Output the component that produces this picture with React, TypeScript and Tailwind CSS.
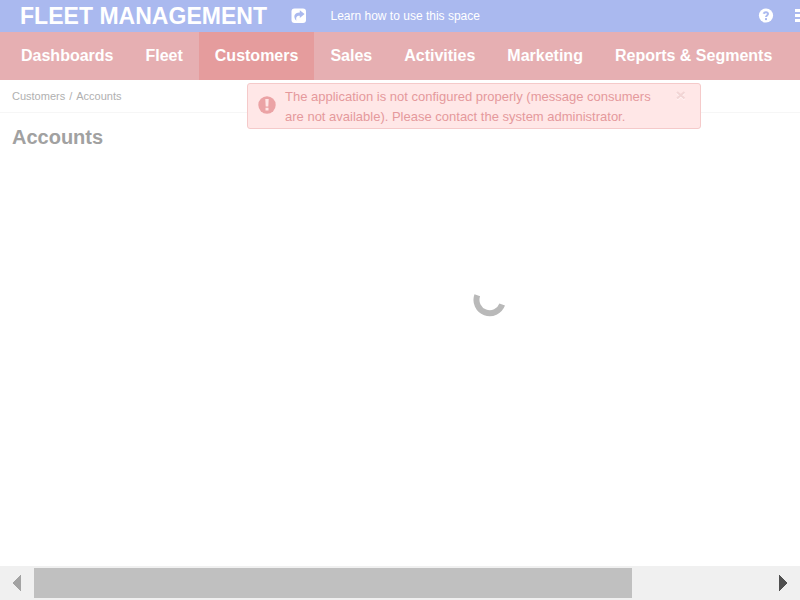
import React from "react";

const items = ["Dashboards", "Fleet", "Customers", "Sales", "Activities", "Marketing", "Reports & Segments"];

function TopBar() {
  return (
    <header className="flex h-8 shrink-0 items-center bg-[#aab9ef] pl-5 text-white">
      <h1 className="w-[271px] text-[23px] leading-8 font-bold tracking-[0.03px] whitespace-nowrap">FLEET MANAGEMENT</h1>
      <svg className="mb-px h-4 w-4 shrink-0" viewBox="0 0 16 16">
        <rect x="0.5" y="0.5" width="14.5" height="14.5" rx="3" fill="#fff" />
        <path d="M8.8 2.3L13.6 6.1L8.8 9.9V7.8C5.8 7.6 4.7 9 5.4 12.8C2 9.2 2.8 4.4 8.8 4.4Z" fill="#aab9ef" />
      </svg>
      <a className="ml-[23.5px] flex-1 text-[12px] leading-8 whitespace-nowrap">Learn how to use this space</a>
      <svg className="h-4 w-4 shrink-0" viewBox="0 0 16 16">
        <circle cx="8" cy="7.5" r="7.1" fill="#fff" />
        <path d="M5.7 5.8C6.2 3.5 10.2 3.6 10 6C9.9 7.5 8 7.4 8 9.1" fill="none" stroke="#aab9ef" strokeWidth="2" />
        <rect x="7" y="10.1" width="2" height="2" fill="#aab9ef" />
      </svg>
      <div className="mb-0.5 ml-[21px] flex w-[5px] flex-col gap-0.5">
        <i className="h-[3px] bg-white" />
        <i className="h-[3px] bg-white" />
        <i className="h-[3px] bg-white" />
      </div>
    </header>
  );
}

function Alert() {
  return (
    <div className="absolute top-[83px] left-[247px] flex h-[46px] w-[454px] rounded-[3px] border border-[#f5caca] bg-[#ffe6e6]/97">
      <svg className="mt-3 ml-2.5 h-[18px] w-[18px] shrink-0" viewBox="0 0 18 18">
        <circle cx="9" cy="9" r="8.7" fill="#eba3a5" />
        <path d="M7.3 3H10.7L10.3 10.5H7.7ZM7.5 11.7H10.5V14.6H7.5Z" fill="#ffe6e6" />
      </svg>
      <p className="mt-[3px] ml-[9px] w-[385px] text-[13px] leading-5 text-[#e5999c]">
        The application is not configured properly (message consumers
        <br />
        are not available). Please contact the system administrator.
      </p>
      <svg className="mt-[7px] ml-[6px] h-[10px] w-[10px]" viewBox="0 0 10 10">
        <path d="M1 2L8.5 8.5M8.5 2L1 8.5" stroke="#fff5f5" strokeWidth="2.2" />
        <path d="M1 1L8.5 7.5M8.5 1L1 7.5" stroke="#f2d5d5" strokeWidth="2.2" />
      </svg>
    </div>
  );
}

export default function App() {
  return (
    <div className="relative flex h-[600px] w-[800px] flex-col overflow-hidden bg-white font-['Liberation_Sans',Arial,sans-serif]">
      <TopBar />
      <nav className="flex h-12 shrink-0 gap-px bg-[#e6afb2] pl-[5.5px] text-[16px] leading-[47px] font-bold text-white">
        {items.map((item) => (
          <a key={item} className={item === "Customers" ? "bg-[#e59c9d] px-[15.5px] whitespace-nowrap" : "px-[15.5px] whitespace-nowrap"}>
            {item}
          </a>
        ))}
      </nav>
      <div className="h-[33px] shrink-0 border-b border-[#f6f6f6] pl-3 text-[11px] leading-8 text-[#b0b0b0]">
        Customers<span className="mx-1">/</span>Accounts
      </div>
      <h2 className="pl-3 text-[20px] leading-[48px] font-bold text-[#a1a1a1]">Accounts</h2>
      <main className="flex-1 pt-[122px] pl-[473px]">
        <svg className="h-9 w-8" viewBox="0 0 32 36">
          <path d="M4.3 12.3A12.7 12.7 0 0 0 29.2 21.5" fill="none" stroke="#b9b9b9" strokeWidth="6" />
        </svg>
      </main>
      <div className="flex h-[34px] shrink-0 items-center bg-[#f0f0f0]">
        <div className="flex w-[34px] justify-end pr-[13px]">
          <svg className="h-4 w-2" viewBox="0 0 8 16" shapeRendering="crispEdges">
            <path d="M8 0V16L0 8.5V7.5Z" fill="#a3a3a3" />
          </svg>
        </div>
        <div className="h-[30px] w-[598px] bg-[#c0c0c0]" />
        <div className="flex flex-1 justify-end pr-[13px]">
          <svg className="h-4 w-2" viewBox="0 0 8 16" shapeRendering="crispEdges">
            <path d="M0 0V16L8 8.5V7.5Z" fill="#505050" />
          </svg>
        </div>
      </div>
      <Alert />
    </div>
  );
}
